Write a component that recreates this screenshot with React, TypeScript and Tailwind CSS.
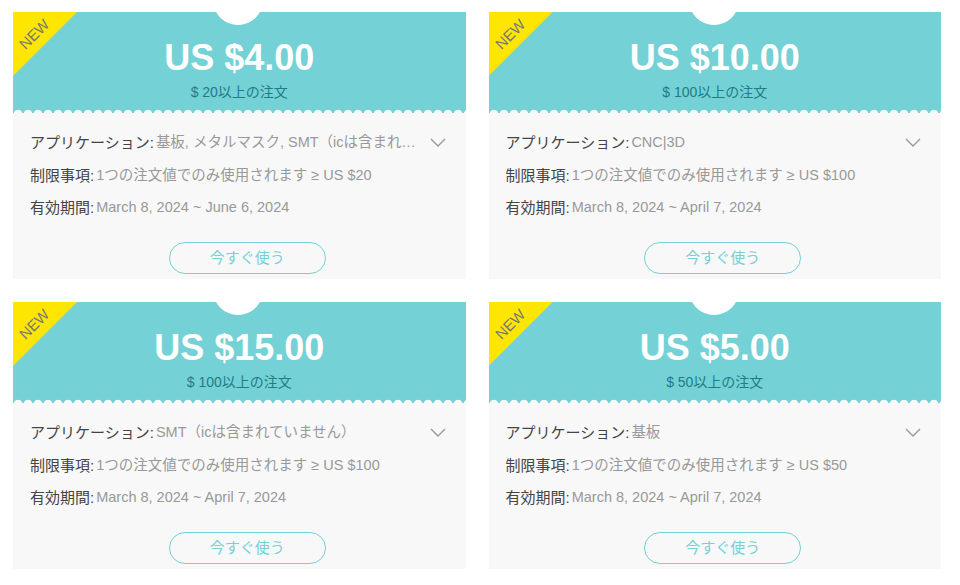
const coupons = [
  {
    amount: 'US $4.00',
    min: '$ 20以上の注文',
    app: '基板, メタルマスク, SMT（icは含まれていません）',
    limit: '1つの注文値でのみ使用されます ≥ US $20',
    period: 'March 8, 2024 ~ June 6, 2024',
  },
  {
    amount: 'US $10.00',
    min: '$ 100以上の注文',
    app: 'CNC|3D',
    limit: '1つの注文値でのみ使用されます ≥ US $100',
    period: 'March 8, 2024 ~ April 7, 2024',
  },
  {
    amount: 'US $15.00',
    min: '$ 100以上の注文',
    app: 'SMT（icは含まれていません）',
    limit: '1つの注文値でのみ使用されます ≥ US $100',
    period: 'March 8, 2024 ~ April 7, 2024',
  },
  {
    amount: 'US $5.00',
    min: '$ 50以上の注文',
    app: '基板',
    limit: '1つの注文値でのみ使用されます ≥ US $50',
    period: 'March 8, 2024 ~ April 7, 2024',
  },
]

type Coupon = (typeof coupons)[number]

function Row({ label, value, truncate }: { label: string; value: string; truncate?: boolean }) {
  return (
    <div className="flex h-5 min-w-0 items-center leading-5">
      <span className="shrink-0 text-[15px] text-[#444]">{label}:</span>
      <span
        className={`ml-[2px] -mt-[2px] min-w-0 text-[14.5px] text-[#999] ${
          truncate ? 'truncate' : 'whitespace-nowrap'
        }`}
      >
        {value}
      </span>
    </div>
  )
}

function CouponCard({ coupon }: { coupon: Coupon }) {
  return (
    <div className="relative h-[267px] overflow-hidden">
      <div className="relative flex h-[101px] flex-col items-center bg-[#74d1d5]">
        <div className="absolute -top-[37px] left-1/2 h-[50px] w-[50px] -translate-x-[26px] rounded-full bg-white" />
        <div className="absolute left-0 top-0 h-[64px] w-[64px] bg-[#ffe600] [clip-path:polygon(0_0,100%_0,0_100%)]" />
        <span className="absolute left-[21px] top-[22px] -translate-x-1/2 -translate-y-1/2 -rotate-45 text-[15px] leading-none text-[#777]">
          NEW
        </span>
        <p className="mt-[26px] text-[36px] font-bold leading-[40px] text-white">
          {coupon.amount}
        </p>
        <p className="mt-[4px] text-[14px] leading-5 text-[#1f7d86]">{coupon.min}</p>
        <div className="absolute bottom-0 left-0 right-0 h-[4px] bg-[radial-gradient(circle_at_50%_5px,#f8f8f8_4px,transparent_4.6px)] bg-[length:10px_4px] bg-repeat-x" />
      </div>
      <div className="flex h-[166px] flex-col bg-[#f8f8f8] pl-[17px] pr-[20px] pt-[20px]">
        <div className="flex items-center gap-3">
          <div className="min-w-0 flex-1">
            <Row label="アプリケーション" value={coupon.app} truncate />
          </div>
          <svg width="16" height="10" viewBox="0 0 16 10" className="shrink-0">
            <polyline points="1,1 8,8 15,1" fill="none" stroke="#999" strokeWidth="1.4" />
          </svg>
        </div>
        <div className="mt-[13px]">
          <Row label="制限事項" value={coupon.limit} />
        </div>
        <div className="mt-[12px]">
          <Row label="有効期間" value={coupon.period} />
        </div>
        <div className="mt-[24px] flex justify-center pl-[19px]">
          <button className="h-[32px] w-[157px] rounded-full border border-[#74d1d5] text-[15px] text-[#74d1d5]">
            今すぐ使う
          </button>
        </div>
      </div>
    </div>
  )
}

export default function App() {
  return (
    <div
      className="h-[585px] w-[960px] bg-white"
      style={{ fontFamily: '"Liberation Sans", Arial, "Noto Sans CJK JP", sans-serif' }}
    >
      <div className="grid grid-cols-2 gap-[23px] pl-[13px] pr-[19px] pt-[12px]">
        {coupons.map((c) => (
          <CouponCard key={c.amount} coupon={c} />
        ))}
      </div>
    </div>
  )
}
